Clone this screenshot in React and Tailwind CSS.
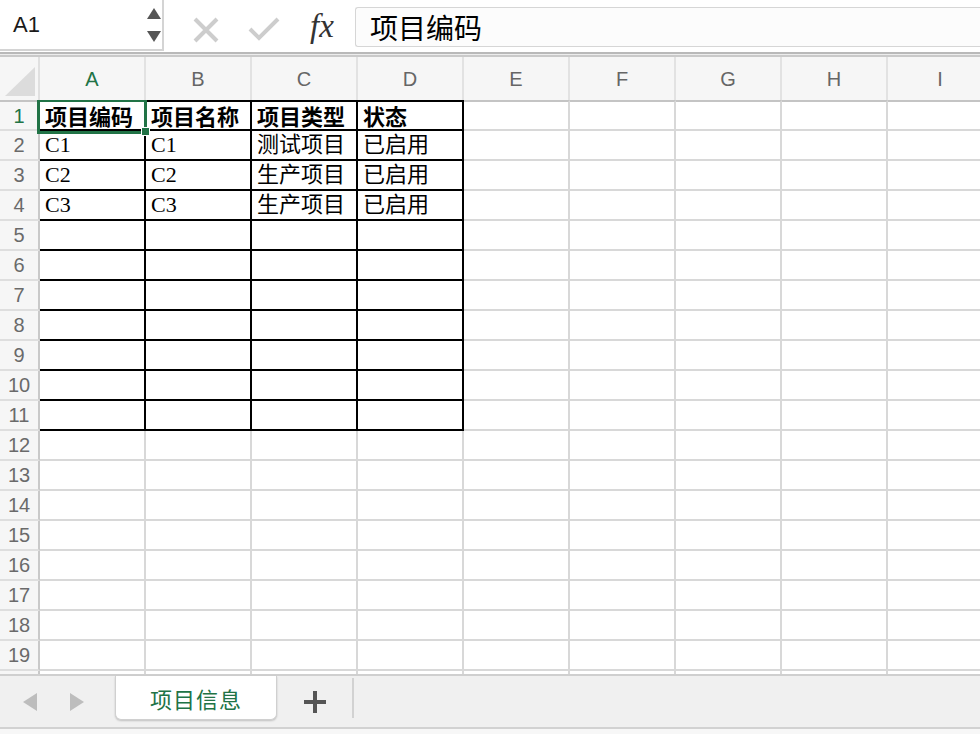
import React from "react";

const COLS = ["A", "B", "C", "D", "E", "F", "G", "H", "I"];
const DATA = {
  1: ["项目编码", "项目名称", "项目类型", "状态"],
  2: ["C1", "C1", "测试项目", "已启用"],
  3: ["C2", "C2", "生产项目", "已启用"],
  4: ["C3", "C3", "生产项目", "已启用"],
};

const cellFont = {
  fontFamily: '"Liberation Serif", "Noto Sans CJK SC", serif',
};

function Row({ n }) {
  const inTable = n <= 11;
  const first = n === 1;
  return (
    <div className="flex shrink-0">
      <div
        className={`w-[40px] shrink-0 bg-[#f6f6f6] border-r-2 border-r-[#c9c9c9] border-b-2 border-b-[#dedede] flex items-center justify-center text-[20px] ${
          first ? "h-[31px] border-t-2 border-t-[#c4c4c4] text-[#217346]" : "h-[30px] text-[#6a6a6a]"
        }`}
        style={{ fontFamily: '"Liberation Sans", Arial, sans-serif' }}
      >
        {n <= 19 ? n : ""}
      </div>
      {COLS.map((c, i) => {
        const black = inTable && i < 4;
        const val = DATA[n] ? DATA[n][i] : undefined;
        return (
          <div
            key={c}
            className={`relative w-[106px] shrink-0 border-r-2 border-b-2 flex items-center pl-[5px] text-[22px] text-black whitespace-nowrap ${
              black ? "border-black" : "border-[#d8d8d8]"
            } ${first ? "h-[31px] border-t-2 leading-[24px] pb-[2px]" : "h-[30px] leading-[26px]"} ${
              first && !black ? "border-t-[#c4c4c4]" : ""
            } ${first ? "font-bold" : ""} ${n === 1 && i === 0 ? "z-10" : ""}`}
            style={
              first
                ? { fontFamily: '"Noto Sans CJK SC", sans-serif' }
                : cellFont
            }
          >
            {val}
            {n === 1 && i === 0 && (
              <>
                <div className="absolute left-[-3px] top-[-3px] w-[110px] h-[35px] border-[3px] border-[#217346] pointer-events-none" />
                <div className="absolute left-[101px] top-[25px] w-[9px] h-[9px] bg-[#217346] border border-white" />
              </>
            )}
          </div>
        );
      })}
    </div>
  );
}

export default function App() {
  const rows = Array.from({ length: 20 }, (_, i) => i + 1);
  return (
    <div
      className="w-[980px] h-[734px] flex flex-col overflow-hidden bg-white"
      style={{ fontFamily: '"Liberation Sans", "Noto Sans CJK SC", sans-serif' }}
    >
      {/* formula bar */}
      <div className="h-[52px] shrink-0 flex items-start bg-white">
        <div className="w-[164px] h-[51px] shrink-0 border-r-2 border-b-2 border-[#d4d4d4] flex items-center relative">
          <span className="ml-[13px] text-[22px] text-[#1a1a1a]">A1</span>
          <svg className="absolute left-[147px] top-[8px]" width="14" height="36" viewBox="0 0 14 36">
            <polygon points="7,0 14,11 0,11" fill="#555" />
            <polygon points="0,23 14,23 7,34" fill="#555" />
          </svg>
        </div>
        <div className="w-[191px] h-[51px] shrink-0 relative">
          <svg className="absolute left-[29px] top-[17px]" width="26" height="26" viewBox="0 0 26 26">
            <path d="M2 2 L24 24 M24 2 L2 24" stroke="#cdcdcd" strokeWidth="4" strokeLinecap="butt" />
          </svg>
          <svg className="absolute left-[84px] top-[17px]" width="32" height="26" viewBox="0 0 32 26">
            <path d="M2 12 L11 21 L30 2" stroke="#cdcdcd" strokeWidth="4" fill="none" />
          </svg>
          <span
            className="absolute left-[146px] top-[6px] text-[33px] leading-[40px] italic text-[#333]"
            style={{ fontFamily: '"Liberation Serif", serif' }}
          >
            fx
          </span>
        </div>
        <div className="flex-1 mt-[7px] h-[40px] bg-[#fcfcfc] border border-r-0 border-[#d6d6d6] rounded-l-[3px] flex items-center pl-[14px]">
          <span className="text-[28px] leading-[36px] text-black" style={{ fontFamily: '"Noto Sans CJK SC", sans-serif' }}>
            项目编码
          </span>
        </div>
      </div>
      {/* divider strip */}
      <div className="h-[5px] shrink-0 border-t-2 border-t-[#b9b9b9] border-b-2 border-b-[#c9c9c9] bg-[#ececec]" />
      {/* column header */}
      <div className="h-[43px] shrink-0 flex bg-[#f6f6f6]">
        <div className="w-[40px] shrink-0 border-r-2 border-[#e0e0e0] relative">
          <svg className="absolute left-[5px] top-[10px]" width="30" height="29" viewBox="0 0 30 29">
            <polygon points="30,0 30,29 0,29" fill="#dcdcdc" />
          </svg>
        </div>
        {COLS.map((c, i) => (
          <div
            key={c}
            className={`w-[106px] shrink-0 border-r-2 border-[#e2e2e2] flex items-center justify-center text-[20px] ${
              i === 0 ? "text-[#217346]" : "text-[#666]"
            }`}
            style={{ fontFamily: '"Liberation Sans", Arial, sans-serif' }}
          >
            {c}
          </div>
        ))}
      </div>
      {/* grid */}
      <div className="flex-1 overflow-hidden flex flex-col">
        {rows.map((n) => (
          <Row key={n} n={n} />
        ))}
      </div>
      {/* sheet tabs */}
      <div className="h-[60px] shrink-0 border-t-2 border-[#cfcfcf] bg-[#f0f0f0] flex flex-col">
        <div className="h-[51px] flex items-start">
          <div className="w-[115px] h-[51px] shrink-0 flex items-center">
            <svg className="ml-[23px]" width="14" height="18" viewBox="0 0 14 18">
              <polygon points="14,0 14,18 0,9" fill="#bdbdbd" />
            </svg>
            <svg className="ml-[33px]" width="14" height="18" viewBox="0 0 14 18">
              <polygon points="0,0 14,9 0,18" fill="#bdbdbd" />
            </svg>
          </div>
          <div className="w-[162px] h-[44px] shrink-0 bg-white rounded-b-[6px] border-l border-r border-b border-[#d0d0d0] shadow-[0_1px_2px_rgba(0,0,0,0.2)] flex items-center justify-center">
            <span
              className="text-[22px] tracking-[1px] text-[#217346] mt-[2px]"
              style={{ fontFamily: '"Noto Sans CJK SC", sans-serif' }}
            >
              项目信息
            </span>
          </div>
          <div className="w-[75px] h-[51px] shrink-0 flex items-center justify-center">
            <svg width="22" height="22" viewBox="0 0 22 22">
              <path d="M11 0 V22 M0 11 H22" stroke="#555" strokeWidth="4" />
            </svg>
          </div>
          <div className="w-[2px] h-[40px] mt-[2px] bg-[#d2d2d2]" />
        </div>
        <div className="flex-1 border-t-2 border-[#d2d2d2] bg-[#f7f7f7]" />
      </div>
    </div>
  );
}
